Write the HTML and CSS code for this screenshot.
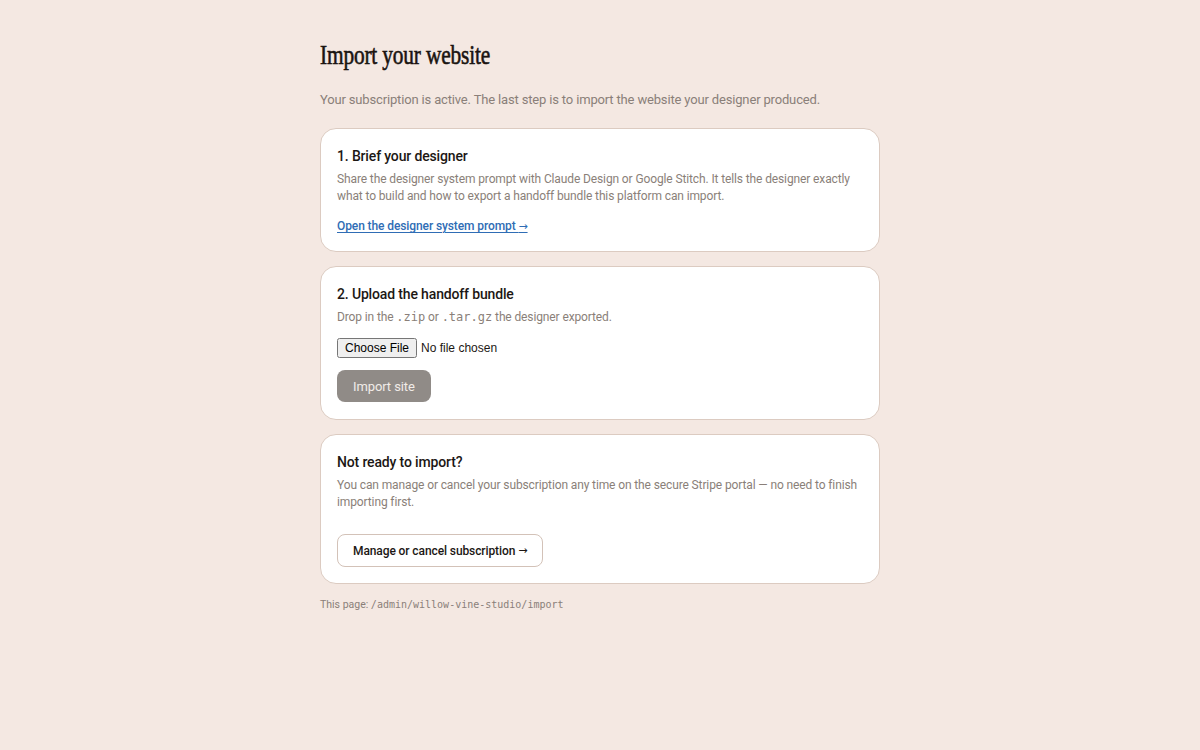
FILE: index.html
```html
<!DOCTYPE html>
<html lang="en">
<head>
<meta charset="utf-8">
<title>Import your website</title>
<link rel="stylesheet" href="styles.css">
</head>
<body>
<main class="page">
  <h1 class="page-title"><span class="page-title-text">Import your website</span></h1>
  <p class="page-lead">Your subscription is active. The last step is to import the website your designer produced.</p>

  <section class="card">
    <h2 class="card-title">1. Brief your designer</h2>
    <p class="card-text">Share the designer system prompt with Claude Design or Google Stitch. It tells the designer exactly what to build and how to export a handoff bundle this platform can import.</p>
    <a class="card-link" href="#">Open the designer system prompt <span class="arrow">→</span></a>
  </section>

  <section class="card">
    <h2 class="card-title">2. Upload the handoff bundle</h2>
    <p class="card-text">Drop in the <code class="mono">.zip</code> or <code class="mono">.tar.gz</code> the designer exported.</p>
    <form class="upload">
      <input class="upload-input" type="file" accept=".zip,.tar.gz">
      <button class="btn-primary" type="button" disabled>Import site</button>
    </form>
  </section>

  <section class="card">
    <h2 class="card-title">Not ready to import?</h2>
    <p class="card-text">You can manage or cancel your subscription any time on the secure Stripe portal — no need to finish importing first.</p>
    <a class="btn-outline" href="#">Manage or cancel subscription <span class="arrow">→</span></a>
  </section>

  <p class="page-foot">This page: <code class="mono">/admin/willow-vine-studio/import</code></p>
</main>
</body>
</html>
```
FILE: styles.css
```css
* { box-sizing: border-box; }

html, body {
  margin: 0;
  background: #f4e8e2;
}

body {
  font-family: Roboto, "Noto Sans", sans-serif;
  color: #1c1714;
}

.page {
  width: 560px;
  margin: 0 auto;
  padding-top: 38px;
  display: flex;
  flex-direction: column;
  gap: 14px;
}

/* condensed display serif for the page heading */
.page-title {
  margin: 0;
  font-family: "Liberation Serif", "Times New Roman", serif;
  font-weight: 400;
  font-size: 27px;
  line-height: 34px;
  color: #1a1411;
}

.page-title-text {
  display: inline-block;
  transform: scaleX(0.79);
  transform-origin: left center;
  letter-spacing: -0.2px;
  -webkit-text-stroke: 0.6px #1a1411;
}

.page-lead {
  margin: 4px 0 4px;
  font-size: 13px;
  letter-spacing: -0.16px;
  line-height: 20px;
  color: #8a7f79;
}

.card {
  background: #ffffff;
  border: 1px solid #dccbc1;
  border-radius: 16px;
  padding: 17px 16px 16px;
  display: flex;
  flex-direction: column;
  align-items: flex-start;
}

.card-title {
  margin: 0 0 5px;
  font-size: 14px;
  font-weight: 500;
  letter-spacing: -0.15px;
  line-height: 20px;
  color: #1c1714;
}

.card-text {
  margin: 0;
  font-size: 12px;
  letter-spacing: -0.12px;
  line-height: 17px;
  color: #8a7f79;
}

.mono {
  font-family: "DejaVu Sans Mono", monospace;
  font-size: 12px;
  letter-spacing: 0;
}

.card-link {
  margin-top: 12px;
  font-size: 12px;
  font-weight: 500;
  letter-spacing: -0.1px;
  line-height: 18px;
  color: #2f6db5;
  text-decoration: underline;
  text-underline-offset: 2px;
}

.arrow {
  font-family: "DejaVu Sans", sans-serif;
  font-size: 11px;
  line-height: 1;
}

.upload {
  margin-top: 12px;
  padding-bottom: 1px;
  display: flex;
  flex-direction: column;
  align-items: flex-start;
  gap: 12px;
}

.upload-input {
  font-family: "Liberation Sans", Arial, sans-serif;
  font-size: 12px;
}

.btn-primary {
  height: 32px;
  padding: 0 16px;
  border: none;
  border-radius: 8px;
  background: #908b87;
  color: #f1ebe7;
  font-family: Roboto, "Noto Sans", sans-serif;
  font-size: 13px;
  letter-spacing: -0.1px;
}

.btn-outline {
  margin-top: 23px;
  height: 33px;
  padding: 0 15px;
  display: inline-flex;
  align-items: center;
  gap: 3px;
  border: 1px solid #d3c2b8;
  border-radius: 8px;
  background: #ffffff;
  color: #1c1714;
  font-size: 12px;
  font-weight: 500;
  letter-spacing: -0.1px;
  text-decoration: none;
}

.page-foot {
  margin: 0;
  font-size: 10.5px;
  color: #8a7f79;
}

.page-foot .mono {
  font-size: 10px;
}
```
